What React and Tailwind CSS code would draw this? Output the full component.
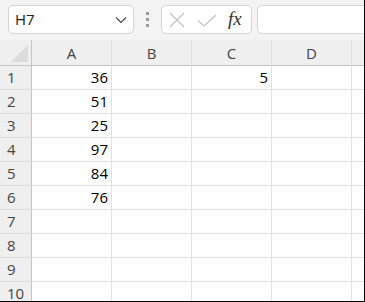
import React from "react";

const cols = ["A", "B", "C", "D", "E"];
const rows = [
  { n: 1, A: "36", C: "5" },
  { n: 2, A: "51" },
  { n: 3, A: "25" },
  { n: 4, A: "97" },
  { n: 5, A: "84" },
  { n: 6, A: "76" },
  { n: 7 },
  { n: 8 },
  { n: 9 },
  { n: 10 },
];

const font = { fontFamily: '"Segoe UI", "Open Sans", "Noto Sans", sans-serif' };

function Toolbar() {
  return (
    <div className="flex items-start h-[40px] w-[420px] bg-[#f3f3f3] pt-[5px] pl-[8px]">
      {/* name box */}
      <div className="shrink-0 flex items-center justify-between w-[126px] h-[29px] bg-white border border-[#d4d4d4] rounded-[5px] pl-[6px] pr-[6px]">
        <span className="text-[15px] text-[#222]">H7</span>
        <svg width="12" height="8" viewBox="0 0 12 8" className="mt-[1px]">
          <path d="M1 1.5 L6 6.5 L11 1.5" fill="none" stroke="#444" strokeWidth="1.1" />
        </svg>
      </div>

      {/* drag dots */}
      <div className="shrink-0 flex flex-col items-center justify-center gap-[3px] w-[27px] h-[29px]">
        <span className="w-[3px] h-[3px] bg-[#9a9a9a]" />
        <span className="w-[3px] h-[3px] bg-[#9a9a9a]" />
        <span className="w-[3px] h-[3px] bg-[#9a9a9a]" />
      </div>

      {/* cancel / enter / fx */}
      <div className="shrink-0 flex items-center w-[91px] h-[29px] bg-white border border-[#d4d4d4] rounded-[5px] pl-[7px]">
        <svg width="16" height="16" viewBox="0 0 16 16" className="shrink-0">
          <path d="M1 1 L15 15 M15 1 L1 15" stroke="#c2c2c2" strokeWidth="1.1" fill="none" />
        </svg>
        <svg width="20" height="13" viewBox="0 0 20 13" className="shrink-0 ml-[12px] mt-[2px]">
          <path d="M1 6.5 L7 12 L19 1" stroke="#c2c2c2" strokeWidth="1.1" fill="none" />
        </svg>
        <span
          className="ml-[11px] text-[19px] italic leading-none text-[#333] mb-[3px]"
          style={{ fontFamily: '"Liberation Serif", serif' }}
        >
          fx
        </span>
      </div>

      {/* formula input */}
      <div className="shrink-0 ml-[5px] w-[140px] h-[29px] bg-white border border-[#d4d4d4] rounded-[5px]" />
    </div>
  );
}

export default function App() {
  return (
    <div
      className="w-[365px] h-[302px] overflow-hidden bg-white border-r border-b border-black"
      style={font}
    >
      <Toolbar />

      <div className="grid grid-cols-[32px_80px_80px_80px_80px_80px] grid-rows-[26px_repeat(10,24px)] w-[432px]">
        {/* select all corner */}
        <div className="bg-[#efefef] border-r border-b border-[#c4c4c4] flex items-end justify-end pr-[3px] pb-[3px]">
          <svg width="17" height="17" viewBox="0 0 17 17">
            <path d="M17 0 L17 17 L0 17 Z" fill="#dcdcdc" />
          </svg>
        </div>
        {cols.map((c) => (
          <div
            key={c}
            className="bg-[#efefef] border-r border-r-[#dcdcdc] border-b border-b-[#c4c4c4] flex items-center justify-center text-[15px] text-[#444] pt-[1px]"
          >
            {c === "E" ? "" : c}
          </div>
        ))}

        {rows.map((r) => (
          <React.Fragment key={r.n}>
            <div className="bg-[#efefef] border-r border-r-[#c4c4c4] border-b border-b-[#dcdcdc] flex items-center pl-[7px] text-[15px] text-[#444]">
              {r.n}
            </div>
            {cols.map((c) => (
              <div
                key={c}
                className="border-r border-b border-[#e1e1e1] flex items-center justify-end pr-[3px] text-[15px] text-black"
              >
                {r[c] || ""}
              </div>
            ))}
          </React.Fragment>
        ))}
      </div>
    </div>
  );
}
